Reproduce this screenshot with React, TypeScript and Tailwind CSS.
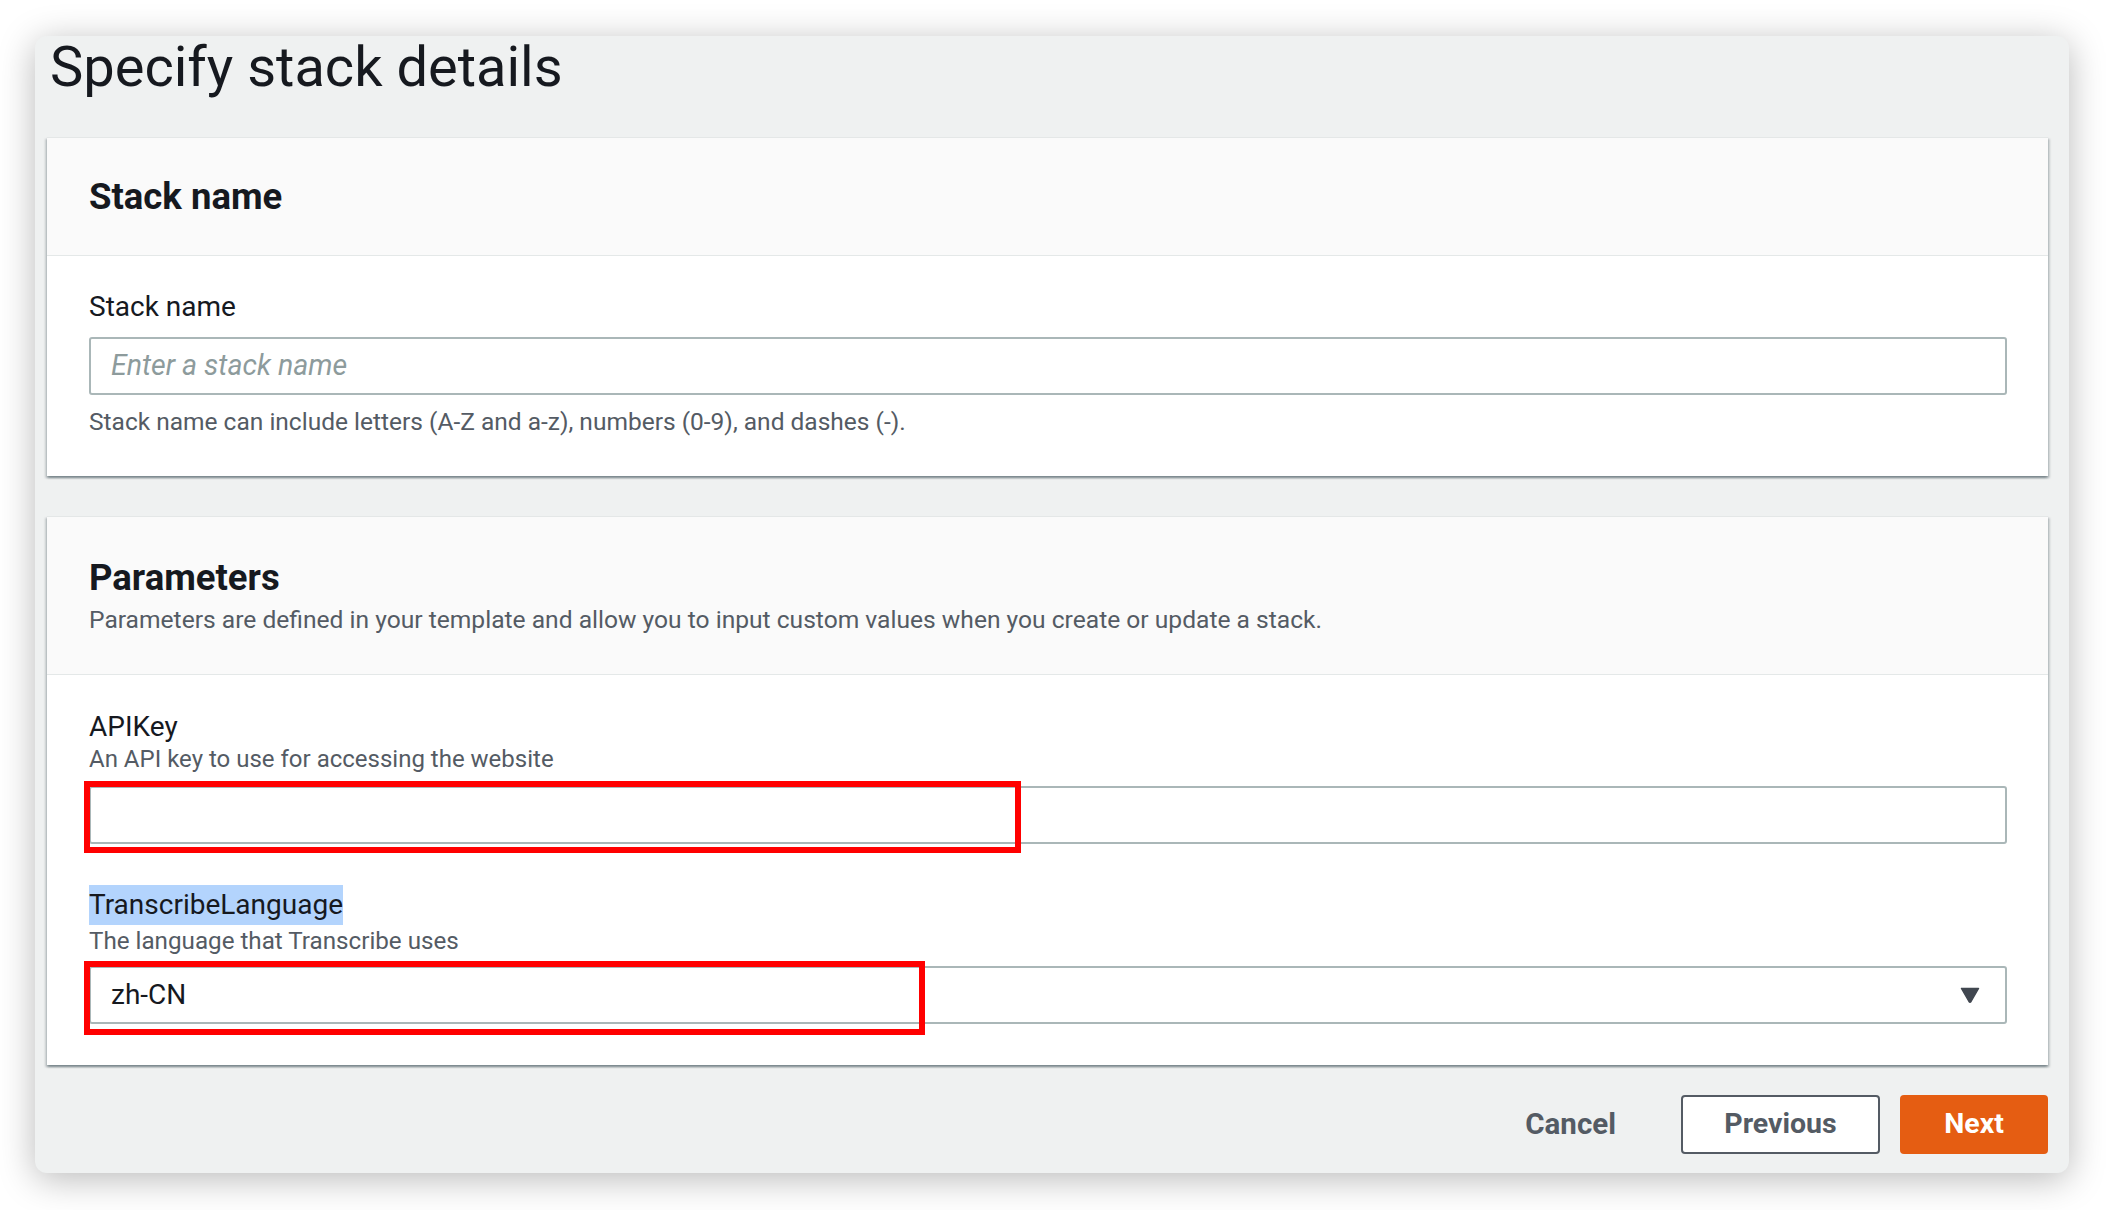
import React from "react";

function Panel({ header, children }: { header: React.ReactNode; children: React.ReactNode }) {
  return (
    <div className="bg-white border-t border-[#e4e7e7] shadow-[0_2px_2px_0_rgba(0,28,36,0.3),2px_2px_2px_0_rgba(0,28,36,0.15),-2px_2px_2px_0_rgba(0,28,36,0.15)]">
      {header}
      {children}
    </div>
  );
}

export default function App() {
  return (
    <div className="min-h-screen bg-white pt-[36px] pl-[35px] font-['Roboto','Noto_Sans',sans-serif] text-[#16191f]">
      <div className="w-[2034px] h-[1137px] rounded-[12px] bg-[#eff1f1] shadow-[0_6px_36px_rgba(0,0,0,0.28)] pl-[12px] pr-[21px] flex flex-col">
        <div className="h-[101px] shrink-0">
          <h1 className="pt-[3px] pl-[3px] text-[56px] leading-[56px] font-normal text-[#16191f]">Specify stack details</h1>
        </div>

        <Panel
          header={
            <div className="h-[118px] bg-[#fafafa] border-b border-[#e4e8e8] flex items-center pl-[42px]">
              <h2 className="text-[36.5px] leading-[44px] font-bold">Stack name</h2>
            </div>
          }
        >
          <div className="pl-[42px] pr-[41px] pt-[33px] pb-[38px]">
            <div className="text-[28px] leading-[36px]">Stack name</div>
            <div className="mt-[12px] h-[58px] rounded-[3px] border-2 border-[#aab7b8] bg-white flex items-center pl-[20px]">
              <span className="text-[28.5px] italic text-[#8d9b9c]">Enter a stack name</span>
            </div>
            <div className="mt-[11px] text-[24.5px] leading-[32px] text-[#545b64]">
              Stack name can include letters (A-Z and a-z), numbers (0-9), and dashes (-).
            </div>
          </div>
        </Panel>

        <div className="h-[40px] shrink-0" />

        <Panel
          header={
            <div className="bg-[#fafafa] border-b border-[#e4e8e8] pl-[42px] pt-[39px] pb-[38px]">
              <h2 className="text-[36.5px] leading-[44px] font-bold">Parameters</h2>
              <div className="mt-[4px] text-[24.6px] leading-[32px] text-[#545b64]">
                Parameters are defined in your template and allow you to input custom values when you create or update a stack.
              </div>
            </div>
          }
        >
          <div className="pl-[42px] pr-[41px] pt-[36px] pb-[41px]">
            <div className="text-[28px] leading-[32px]">APIKey</div>
            <div className="text-[24px] leading-[32px] text-[#545b64]">An API key to use for accessing the website</div>
            <div className="relative mt-[11px]">
              <div className="h-[58px] rounded-[3px] border-2 border-[#aab7b8] bg-white" />
              <div className="absolute left-[-5px] top-[-5px] w-[937px] h-[72px] border-[6px] border-[#ff0000]" />
            </div>

            <div className="mt-[41px] text-[28px] leading-[40px]">
              <span className="inline-block bg-[#b3d4fd]">TranscribeLanguage</span>
            </div>
            <div className="text-[24.2px] leading-[32px] text-[#545b64]">The language that Transcribe uses</div>
            <div className="relative mt-[9px]">
              <div className="h-[58px] rounded-[3px] border-2 border-[#aab7b8] bg-white flex items-center justify-between pl-[20px] pr-[25px]">
                <span className="text-[28px]">zh-CN</span>
                <svg width="20" height="16" viewBox="0 0 20 16">
                  <path d="M1.5 1.5 H18.5 L11 14.5 Q10 16 9 14.5 Z" fill="#414750" stroke="#414750" strokeWidth="1.5" strokeLinejoin="round" />
                </svg>
              </div>
              <div className="absolute left-[-5px] top-[-5px] w-[841px] h-[74px] border-[6px] border-[#ff0000]" />
            </div>
          </div>
        </Panel>

        <div className="mt-[30px] flex items-center justify-end gap-[20px]">
          <button className="h-[59px] px-[16px] mr-[29px] text-[29.5px] font-bold text-[#545b64]">Cancel</button>
          <button className="h-[59px] w-[199px] rounded-[4px] border-2 border-[#545b64] bg-white text-[28.5px] font-bold text-[#545b64]">Previous</button>
          <button className="h-[59px] w-[148px] rounded-[4px] bg-[#e55d12] text-[28.5px] font-bold text-white">Next</button>
        </div>
      </div>
    </div>
  );
}
